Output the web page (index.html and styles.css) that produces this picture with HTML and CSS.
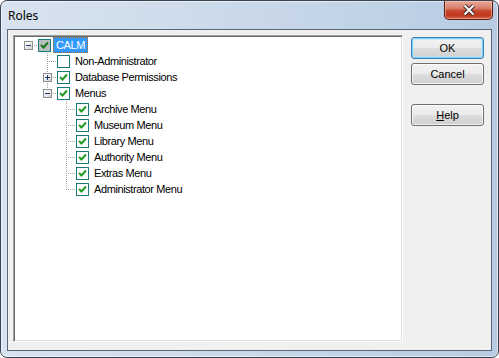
FILE: index.html
```html
<!DOCTYPE html>
<html lang="en">

<head>
    <meta charset="UTF-8">
    <title>Roles</title>
    <link rel="stylesheet" href="styles.css">
</head>

<body>

    <div class="window">
        <!-- title bar -->
        <div class="titlebar">
            <span class="title">Roles</span>
            <span class="close">
                <svg width="14" height="12" viewBox="0 0 14 12">
                    <path d="M2.5 1.5 L11.5 10.5 M11.5 1.5 L2.5 10.5" stroke="#3b2a28" stroke-width="4" fill="none" />
                    <path d="M2.5 1.5 L11.5 10.5 M11.5 1.5 L2.5 10.5" stroke="#ffffff" stroke-width="2" fill="none" />
                </svg>
            </span>
        </div>

        <div class="client">
            <!-- tree -->
            <div class="tree">
                <div class="row">
                    <span class="cell root"><span class="exp minus"></span></span>
                    <span class="chk dim"><svg width="11" height="11"><polyline points="2,5 4.5,7.5 9,2.5" /></svg></span>
                    <span class="label sel">CALM</span>
                </div>
                <div class="row">
                    <span class="cell"></span>
                    <span class="cell tee"></span>
                    <span class="chk"></span>
                    <span class="label">Non-Administrator</span>
                </div>
                <div class="row">
                    <span class="cell"></span>
                    <span class="cell tee"><span class="exp plus"></span></span>
                    <span class="chk"><svg width="11" height="11"><polyline points="2,5 4.5,7.5 9,2.5" /></svg></span>
                    <span class="label">Database Permissions</span>
                </div>
                <div class="row">
                    <span class="cell"></span>
                    <span class="cell ell"><span class="exp minus"></span></span>
                    <span class="chk"><svg width="11" height="11"><polyline points="2,5 4.5,7.5 9,2.5" /></svg></span>
                    <span class="label">Menus</span>
                </div>
                <div class="row">
                    <span class="cell"></span><span class="cell"></span>
                    <span class="cell tee"></span>
                    <span class="chk"><svg width="11" height="11"><polyline points="2,5 4.5,7.5 9,2.5" /></svg></span>
                    <span class="label">Archive Menu</span>
                </div>
                <div class="row">
                    <span class="cell"></span><span class="cell"></span>
                    <span class="cell tee"></span>
                    <span class="chk"><svg width="11" height="11"><polyline points="2,5 4.5,7.5 9,2.5" /></svg></span>
                    <span class="label">Museum Menu</span>
                </div>
                <div class="row">
                    <span class="cell"></span><span class="cell"></span>
                    <span class="cell tee"></span>
                    <span class="chk"><svg width="11" height="11"><polyline points="2,5 4.5,7.5 9,2.5" /></svg></span>
                    <span class="label">Library Menu</span>
                </div>
                <div class="row">
                    <span class="cell"></span><span class="cell"></span>
                    <span class="cell tee"></span>
                    <span class="chk"><svg width="11" height="11"><polyline points="2,5 4.5,7.5 9,2.5" /></svg></span>
                    <span class="label">Authority Menu</span>
                </div>
                <div class="row">
                    <span class="cell"></span><span class="cell"></span>
                    <span class="cell tee"></span>
                    <span class="chk"><svg width="11" height="11"><polyline points="2,5 4.5,7.5 9,2.5" /></svg></span>
                    <span class="label">Extras Menu</span>
                </div>
                <div class="row">
                    <span class="cell"></span><span class="cell"></span>
                    <span class="cell ell"></span>
                    <span class="chk"><svg width="11" height="11"><polyline points="2,5 4.5,7.5 9,2.5" /></svg></span>
                    <span class="label">Administrator Menu</span>
                </div>
            </div>

            <!-- buttons -->
            <div class="buttons">
                <button class="btn default">OK</button>
                <button class="btn">Cancel</button>
                <button class="btn help"><u>H</u>elp</button>
            </div>
        </div>
    </div>

</body>

</html>
```

FILE: styles.css
```css
body {
    margin: 0;
    padding: 0;
    background: #ffffff;
    font-family: 'Liberation Sans', Arial, sans-serif;
}

.window {
    width: 499px;
    height: 358px;
    box-sizing: border-box;
    border: 1px solid #3a4450;
    border-radius: 7px;
    background: linear-gradient(to right, #d8e3ef 0%, #cbdaea 45%, #b7cce3 100%);
    box-shadow: inset 0 0 0 1px rgba(255, 255, 255, 0.55);
    display: flex;
    flex-direction: column;
    overflow: hidden;
}

.titlebar {
    height: 28px;
    display: flex;
    align-items: flex-start;
    justify-content: space-between;
    padding-left: 7px;
}

.title {
    font-family: 'Noto Sans', 'Open Sans', sans-serif;
    font-size: 12px;
    color: #000;
    margin-top: 6px;
}

.close {
    width: 49px;
    height: 19px;
    margin-right: 5px;
    box-sizing: border-box;
    border: 1px solid #5c1c12;
    border-top: none;
    border-radius: 0 0 5px 5px;
    background: linear-gradient(to bottom, #e8a898 0%, #d9806c 40%, #c8452c 55%, #c0391e 80%, #d2694b 100%);
    box-shadow: inset 0 0 0 1px rgba(255, 210, 200, 0.45);
    display: flex;
    align-items: center;
    justify-content: center;
}

.client {
    flex: 1;
    margin: 0 6px 6px 6px;
    border: 1px solid #5a6675;
    background: #f0f0f0;
    display: flex;
    gap: 8px;
    padding: 5px 7px 8px 5px;
}

/* tree view */
.tree {
    width: 390px;
    box-sizing: border-box;
    background: #ffffff;
    border: 1px solid;
    border-color: #a0a0a0 #ffffff #ffffff #a0a0a0;
    box-shadow: inset 1px 1px 0 #696969, inset -1px -1px 0 #e3e3e3;
    padding: 1px 0 0 5px;
    font-size: 11px;
    letter-spacing: -0.4px;
}

.row {
    height: 16px;
    display: flex;
    align-items: center;
}

.cell {
    width: 19px;
    height: 16px;
    flex: none;
    display: flex;
    justify-content: center;
    align-items: flex-start;
}

.root {
    background: repeating-linear-gradient(to right, #a0a0a0 0 1px, transparent 1px 2px) 9px 8px / 10px 1px no-repeat;
}

.tee {
    background:
        repeating-linear-gradient(to bottom, #a0a0a0 0 1px, transparent 1px 2px) 9px 0 / 1px 16px no-repeat,
        repeating-linear-gradient(to right, #a0a0a0 0 1px, transparent 1px 2px) 9px 8px / 10px 1px no-repeat;
}

.ell {
    background:
        repeating-linear-gradient(to bottom, #a0a0a0 0 1px, transparent 1px 2px) 9px 0 / 1px 9px no-repeat,
        repeating-linear-gradient(to right, #a0a0a0 0 1px, transparent 1px 2px) 9px 8px / 10px 1px no-repeat;
}

.exp {
    width: 9px;
    height: 9px;
    margin-top: 4px;
    box-sizing: border-box;
    border: 1px solid #8e8f8f;
    background: linear-gradient(135deg, #ffffff 0%, #e4e4e4 70%, #c8c8c8 100%);
}

.minus {
    background:
        linear-gradient(#1f3b73, #1f3b73) 1px 3px / 5px 1px no-repeat,
        linear-gradient(135deg, #ffffff 0%, #e4e4e4 70%, #c8c8c8 100%);
}

.plus {
    background:
        linear-gradient(#1f3b73, #1f3b73) 1px 3px / 5px 1px no-repeat,
        linear-gradient(#1f3b73, #1f3b73) 3px 1px / 1px 5px no-repeat,
        linear-gradient(135deg, #ffffff 0%, #e4e4e4 70%, #c8c8c8 100%);
}

.chk {
    width: 13px;
    height: 13px;
    flex: none;
    box-sizing: border-box;
    border: 1px solid #1c7a78;
    background: #ffffff;
    display: flex;
}

.chk.dim {
    background: #b8bfbf;
}

.chk polyline {
    fill: none;
    stroke: #1f9e23;
    stroke-width: 2;
}

.chk.dim polyline {
    stroke: #17751a;
}

.label {
    margin-left: 2px;
    padding: 0 2px;
    height: 16px;
    line-height: 14px;
    box-sizing: border-box;
    border: 1px solid transparent;
    white-space: nowrap;
    color: #000;
}

.label.sel {
    background: #3399ff;
    color: #ffffff;
    border: 1px dotted #b86a1a;
}

/* buttons */
.buttons {
    width: 73px;
    display: flex;
    flex-direction: column;
    padding-top: 2px;
}

.btn {
    height: 22px;
    margin-bottom: 4px;
    border: 1px solid #707070;
    border-radius: 3px;
    background: linear-gradient(to bottom, #f2f2f2 0%, #ebebeb 48%, #dddddd 52%, #cfcfcf 100%);
    box-shadow: inset 0 0 0 1px rgba(255, 255, 255, 0.7);
    font-family: 'Liberation Sans', Arial, sans-serif;
    font-size: 11px;
    color: #000;
    padding: 0;
}

.btn.default {
    border-color: #3c7fb1;
    box-shadow: inset 0 0 0 1px #7ed3f7, inset 0 0 0 2px rgba(180, 230, 252, 0.6);
}

.btn.help {
    margin-top: 15px;
}
```
